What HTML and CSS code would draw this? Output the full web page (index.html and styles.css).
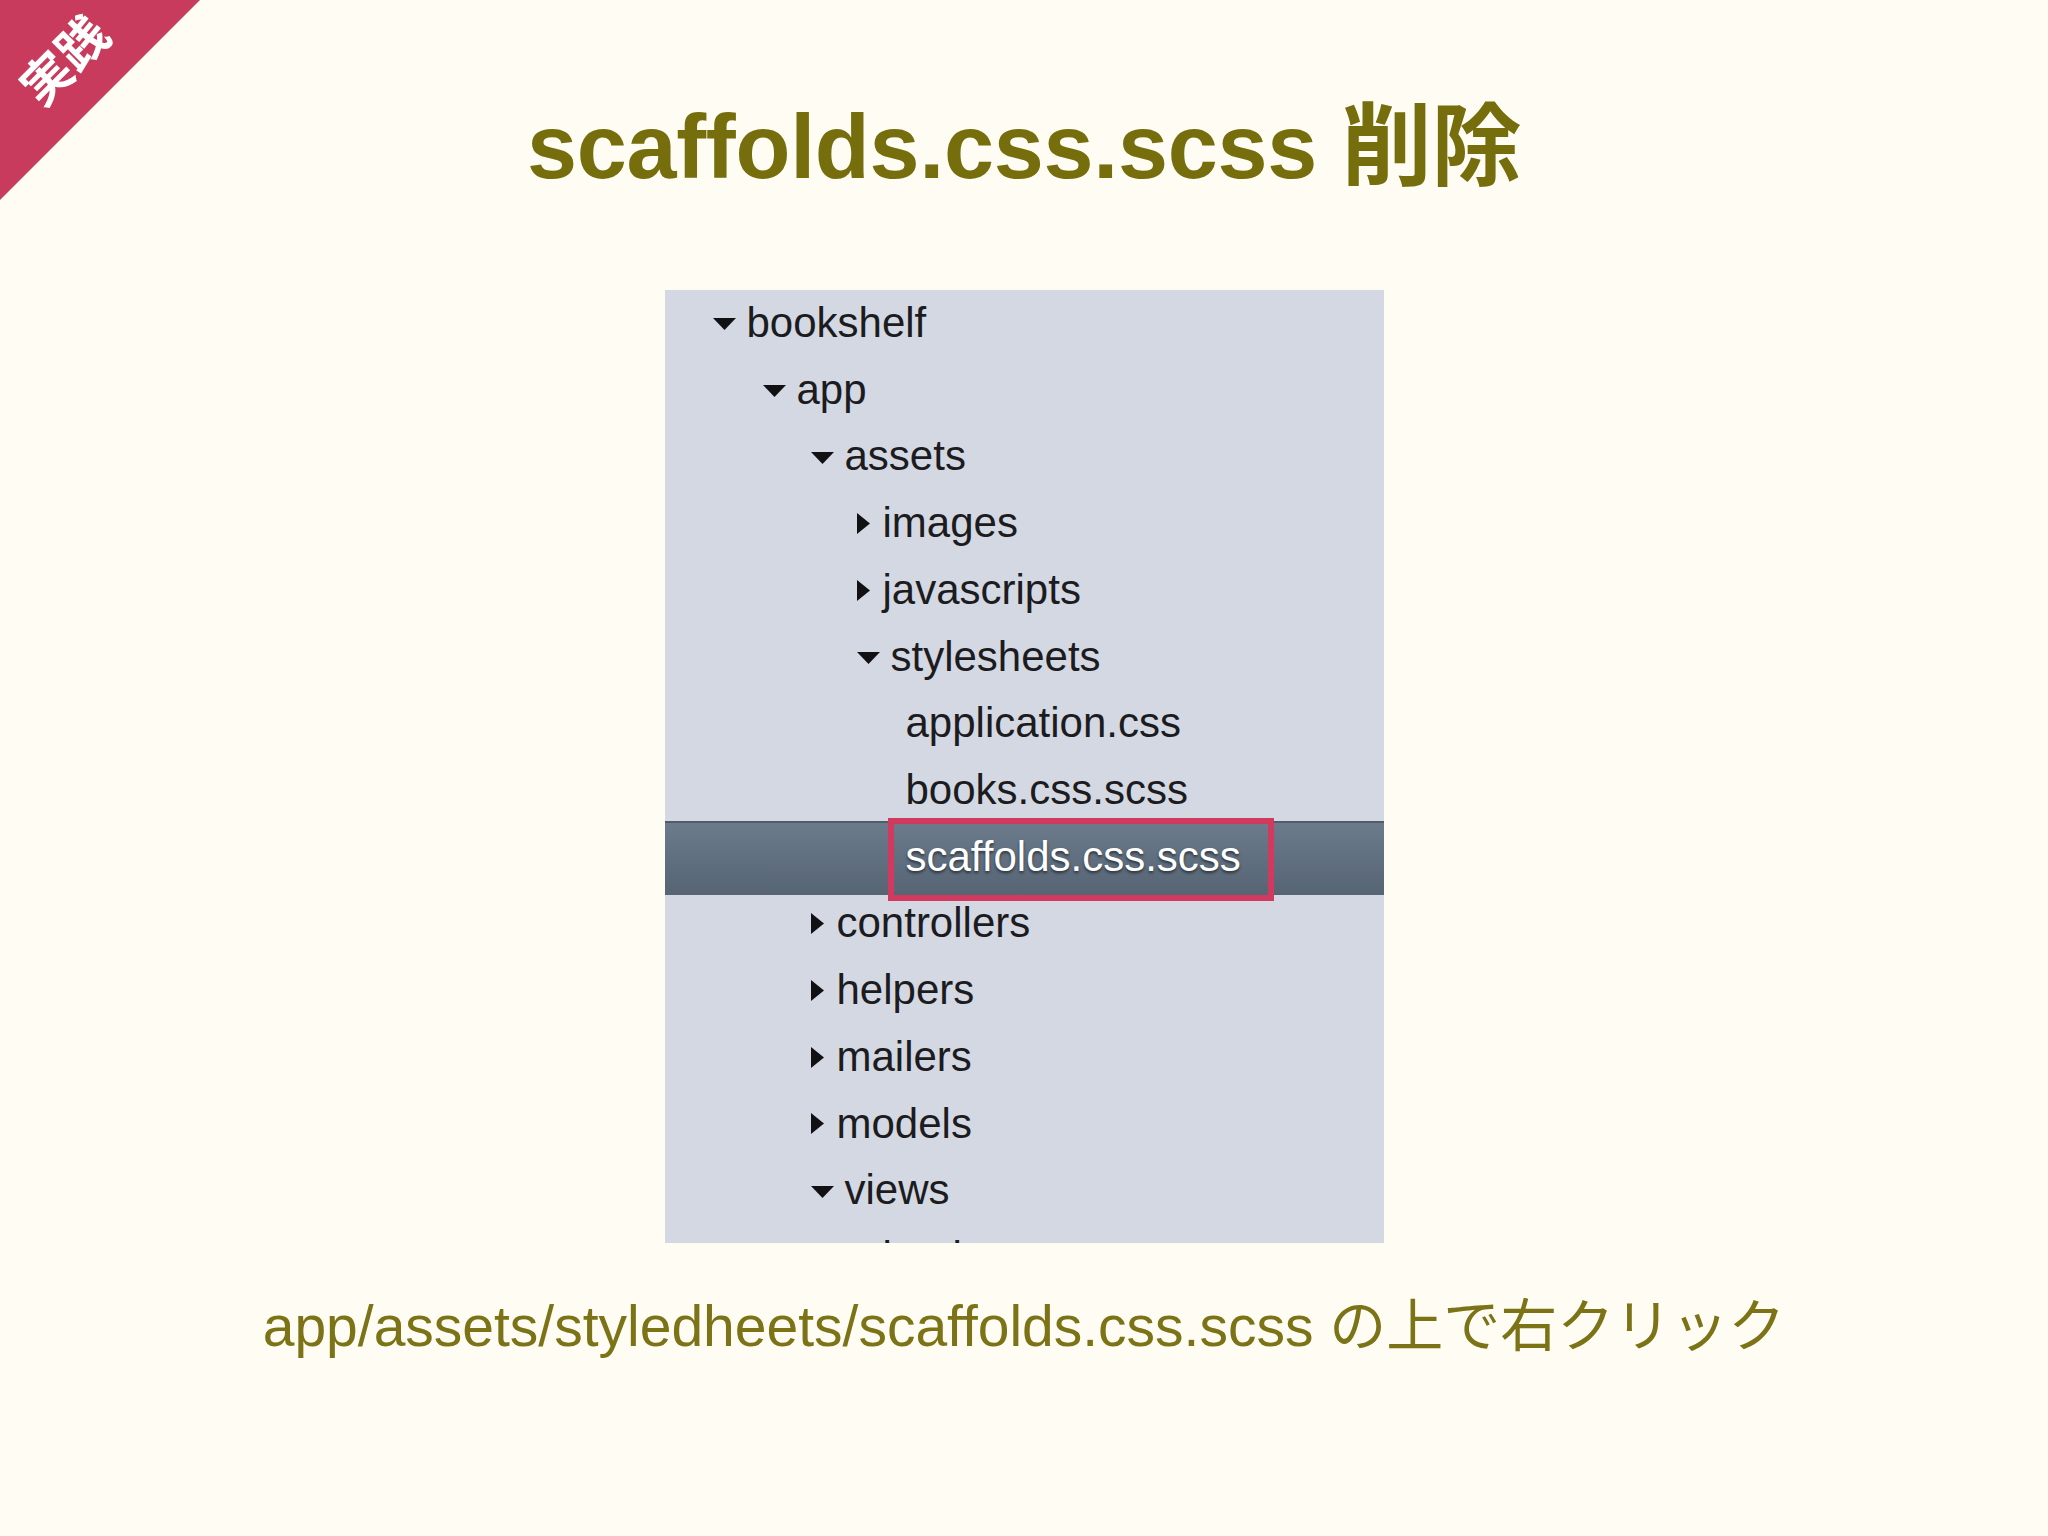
FILE: index.html
```html
<!DOCTYPE html>
<html lang="ja">
<head>
<meta charset="utf-8">
<title>scaffolds.css.scss 削除</title>
<link rel="stylesheet" href="styles.css">
</head>
<body>
<div class="slide">
  <div class="ribbon"><span class="ribbon-text">実践</span></div>
  <h1 class="title">scaffolds.css.scss 削除</h1>
  <div class="tree">
    <div class="row lv0"><svg class="tri down" viewBox="0 0 23 12"><polygon points="0,0 23,0 11.5,12"/></svg><span>bookshelf</span></div>
    <div class="row lv1"><svg class="tri down" viewBox="0 0 23 12"><polygon points="0,0 23,0 11.5,12"/></svg><span>app</span></div>
    <div class="row lv2"><svg class="tri down" viewBox="0 0 23 12"><polygon points="0,0 23,0 11.5,12"/></svg><span>assets</span></div>
    <div class="row lv3"><svg class="tri right" viewBox="0 0 13 21"><polygon points="0,0 13,10.5 0,21"/></svg><span>images</span></div>
    <div class="row lv3"><svg class="tri right" viewBox="0 0 13 21"><polygon points="0,0 13,10.5 0,21"/></svg><span>javascripts</span></div>
    <div class="row lv3"><svg class="tri down" viewBox="0 0 23 12"><polygon points="0,0 23,0 11.5,12"/></svg><span>stylesheets</span></div>
    <div class="row lv4"><span>application.css</span></div>
    <div class="row lv4"><span>books.css.scss</span></div>
    <div class="row lv4 selected"><span>scaffolds.css.scss</span><div class="mark"></div></div>
    <div class="row lv2"><svg class="tri right" viewBox="0 0 13 21"><polygon points="0,0 13,10.5 0,21"/></svg><span>controllers</span></div>
    <div class="row lv2"><svg class="tri right" viewBox="0 0 13 21"><polygon points="0,0 13,10.5 0,21"/></svg><span>helpers</span></div>
    <div class="row lv2"><svg class="tri right" viewBox="0 0 13 21"><polygon points="0,0 13,10.5 0,21"/></svg><span>mailers</span></div>
    <div class="row lv2"><svg class="tri right" viewBox="0 0 13 21"><polygon points="0,0 13,10.5 0,21"/></svg><span>models</span></div>
    <div class="row lv2"><svg class="tri down" viewBox="0 0 23 12"><polygon points="0,0 23,0 11.5,12"/></svg><span>views</span></div>
    <div class="row lv3"><svg class="tri right" viewBox="0 0 13 21"><polygon points="0,0 13,10.5 0,21"/></svg><span>books</span></div>
  </div>
  <p class="caption">app/assets/styledheets/scaffolds.css.scss の上で右クリック</p>
</div>
</body>
</html>
```
FILE: styles.css
```css
html, body {
  margin: 0;
  padding: 0;
  background: #fefcf3;
}

.slide {
  position: relative;
  width: 2048px;
  height: 1536px;
  display: flex;
  flex-direction: column;
  align-items: center;
  background: #fefcf3;
  overflow: hidden;
  font-family: "Liberation Sans", Arial, "Noto Sans CJK JP", sans-serif;
}

.ribbon {
  position: absolute;
  left: 0;
  top: 0;
  width: 200px;
  height: 200px;
}

.ribbon::before {
  content: "";
  position: absolute;
  left: 0;
  top: 0;
  width: 200px;
  height: 200px;
  background: #c93b5c;
  clip-path: polygon(0 0, 100% 0, 0 100%);
}

.ribbon-text {
  position: absolute;
  left: 62px;
  top: 58px;
  transform: translate(-50%, -50%) rotate(-45deg);
  color: #ffffff;
  font-family: "Noto Sans CJK JP", sans-serif;
  font-weight: 700;
  font-size: 50px;
  line-height: 1;
  white-space: nowrap;
}

.title {
  margin: 102px 0 0 0;
  height: 90px;
  font-size: 90px;
  line-height: 90px;
  font-weight: 700;
  color: #766e0d;
  letter-spacing: -0.3px;
  font-family: "Liberation Sans", Arial, "Noto Sans CJK JP", sans-serif;
  white-space: nowrap;
}

.tree {
  margin-top: 98px;
  width: 719px;
  height: 953px;
  background: #d3d8e3;
  overflow: hidden;
  display: flex;
  flex-direction: column;
}

.row {
  position: relative;
  flex: 0 0 66.72px;
  height: 66.72px;
  display: flex;
  align-items: center;
  font-size: 42px;
  color: #1c1c20;
  white-space: nowrap;
}

.row span {
  position: relative;
  line-height: 66.72px;
}

.lv0 { padding-left: 48px; }
.lv1 { padding-left: 98px; }
.lv2 { padding-left: 146px; }
.lv3 { padding-left: 192px; }
.lv4 { padding-left: 241px; }

.tri {
  position: relative;
  fill: #111114;
  flex: 0 0 auto;
}

.tri.down {
  width: 23px;
  height: 12px;
  margin-right: 11px;
  margin-top: 2px;
}

.tri.right {
  width: 13px;
  height: 21px;
  margin-right: 13px;
}

.selected {
  color: #ffffff;
}

.selected::before {
  content: "";
  position: absolute;
  left: 0;
  right: 0;
  top: -3px;
  bottom: -5px;
  background: linear-gradient(#6b7b8b, #566474);
  border-top: 2px solid #4f5d6b;
}

.selected span {
  text-shadow: 0 2px 3px rgba(0, 0, 0, 0.55);
}

.mark {
  position: absolute;
  left: 223px;
  top: -6px;
  width: 386px;
  height: 83px;
  box-sizing: border-box;
  border: 6px solid #d1395f;
}

.caption {
  margin: 55px 0 0 0;
  font-size: 57px;
  line-height: 57px;
  color: #7b7316;
  font-family: "Liberation Sans", Arial, "Noto Sans CJK JP", sans-serif;
  white-space: nowrap;
}
```
